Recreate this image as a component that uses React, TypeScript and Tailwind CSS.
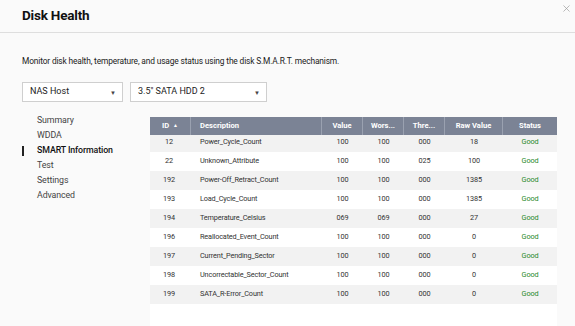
import React from 'react'
import { X } from 'lucide-react'

type Row = {
	id: string
	desc: string
	value: string
	worst: string
	thresh: string
	raw: string
	status: string
}

const rows: Row[] = [
	{ id: '12', desc: 'Power_Cycle_Count', value: '100', worst: '100', thresh: '000', raw: '18', status: 'Good' },
	{ id: '22', desc: 'Unknown_Attribute', value: '100', worst: '100', thresh: '025', raw: '100', status: 'Good' },
	{ id: '192', desc: 'Power-Off_Retract_Count', value: '100', worst: '100', thresh: '000', raw: '1385', status: 'Good' },
	{ id: '193', desc: 'Load_Cycle_Count', value: '100', worst: '100', thresh: '000', raw: '1385', status: 'Good' },
	{ id: '194', desc: 'Temperature_Celsius', value: '069', worst: '069', thresh: '000', raw: '27', status: 'Good' },
	{ id: '196', desc: 'Reallocated_Event_Count', value: '100', worst: '100', thresh: '000', raw: '0', status: 'Good' },
	{ id: '197', desc: 'Current_Pending_Sector', value: '100', worst: '100', thresh: '000', raw: '0', status: 'Good' },
	{ id: '198', desc: 'Uncorrectable_Sector_Count', value: '100', worst: '100', thresh: '000', raw: '0', status: 'Good' },
	{ id: '199', desc: 'SATA_R-Error_Count', value: '100', worst: '100', thresh: '000', raw: '0', status: 'Good' },
]

const navItems = ['Summary', 'WDDA', 'SMART Information', 'Test', 'Settings', 'Advanced']

function Select({ label, width }: { label: string; width: string }) {
	return (
		<div
			className={`${width} h-[20px] flex items-center justify-between pl-[7px] pr-[6px] bg-white border border-[#cfcfcf] text-[9px] text-[#222]`}
		>
			<span>{label}</span>
			<span className="text-[6px] text-[#444]">▼</span>
		</div>
	)
}

export default function App() {
	return (
		<div
			className="w-[575px] h-[326px] overflow-hidden bg-[#fafafa] flex flex-col"
			style={{ fontFamily: 'Roboto, "Liberation Sans", sans-serif' }}
		>
			{/* header */}
			<div className="h-[33px] shrink-0 flex items-center justify-between pl-[22px] pr-[3px] border-b border-[#dedede]">
				<h1 className="text-[13.5px] font-bold text-[#111] tracking-[-0.2px] -mt-[1px]">Disk Health</h1>
				<X className="w-[11px] h-[11px] text-[#9a9a9a] self-start mt-[3px]" strokeWidth={1.5} />
			</div>

			<p className="mt-[22px] pl-[22px] text-[8.4px] leading-[12px] text-[#222] tracking-[-0.15px]">
				Monitor disk health, temperature, and usage status using the disk S.M.A.R.T. mechanism.
			</p>

			<div className="mt-[15px] pl-[22px] flex gap-[7px]">
				<Select label="NAS Host" width="w-[101px]" />
				<Select label={'3.5" SATA HDD 2'} width="w-[137px]" />
			</div>

			<div className="flex flex-1 min-h-0 pl-[22px] mt-[11px]">
				{/* nav */}
				<ul className="w-[128px] shrink-0 flex flex-col">
					{navItems.map((item) => {
						const active = item === 'SMART Information'
						return (
							<li key={item} className="h-[15px] flex items-center">
								<span className={`w-[2px] h-[10px] ${active ? 'bg-[#222]' : 'bg-transparent'}`} />
								<span
									className={`ml-[13px] text-[8.8px] tracking-[-0.1px] ${active ? 'text-[#111] font-medium' : 'text-[#444]'}`}
								>
									{item}
								</span>
							</li>
						)
					})}
				</ul>

				{/* table */}
				<div className="w-[407px] mt-[4px] bg-white flex flex-col overflow-hidden">
					<div className="h-[18px] shrink-0 flex bg-[#7b8395] text-white text-[7.6px] font-bold">
						<div className="w-[41px] flex items-center justify-center gap-[4px] border-r border-[#9aa1b0]">
							ID <span className="text-[5px]">▲</span>
						</div>
						<div className="w-[131px] flex items-center pl-[9px] border-r border-[#9aa1b0]">Description</div>
						<div className="w-[41px] flex items-center justify-center border-r border-[#9aa1b0]">Value</div>
						<div className="w-[41px] flex items-center justify-center border-r border-[#9aa1b0]">Wors...</div>
						<div className="w-[41px] flex items-center justify-center border-r border-[#9aa1b0]">Thre...</div>
						<div className="w-[58px] flex items-center justify-center border-r border-[#9aa1b0]">Raw Value</div>
						<div className="w-[54px] flex items-center justify-center">Status</div>
					</div>
					<div className="flex-1 overflow-hidden">
						<div className="-mt-[2px]">
							{rows.map((r, i) => (
								<div
									key={r.id}
									className={`h-[19px] flex items-center text-[7.3px] tracking-[-0.15px] text-[#333] ${i % 2 === 0 ? 'bg-[#f2f2f2]' : 'bg-white'}`}
								>
									<div className="w-[41px] text-center pr-[3px]">{r.id}</div>
									<div className="w-[131px] pl-[9px]">{r.desc}</div>
									<div className="w-[41px] text-center">{r.value}</div>
									<div className="w-[41px] text-center">{r.worst}</div>
									<div className="w-[41px] text-center">{r.thresh}</div>
									<div className="w-[58px] text-center">{r.raw}</div>
									<div className="w-[54px] text-center text-[#2c8a2c]">{r.status}</div>
								</div>
							))}
						</div>
					</div>
				</div>
			</div>
		</div>
	)
}
